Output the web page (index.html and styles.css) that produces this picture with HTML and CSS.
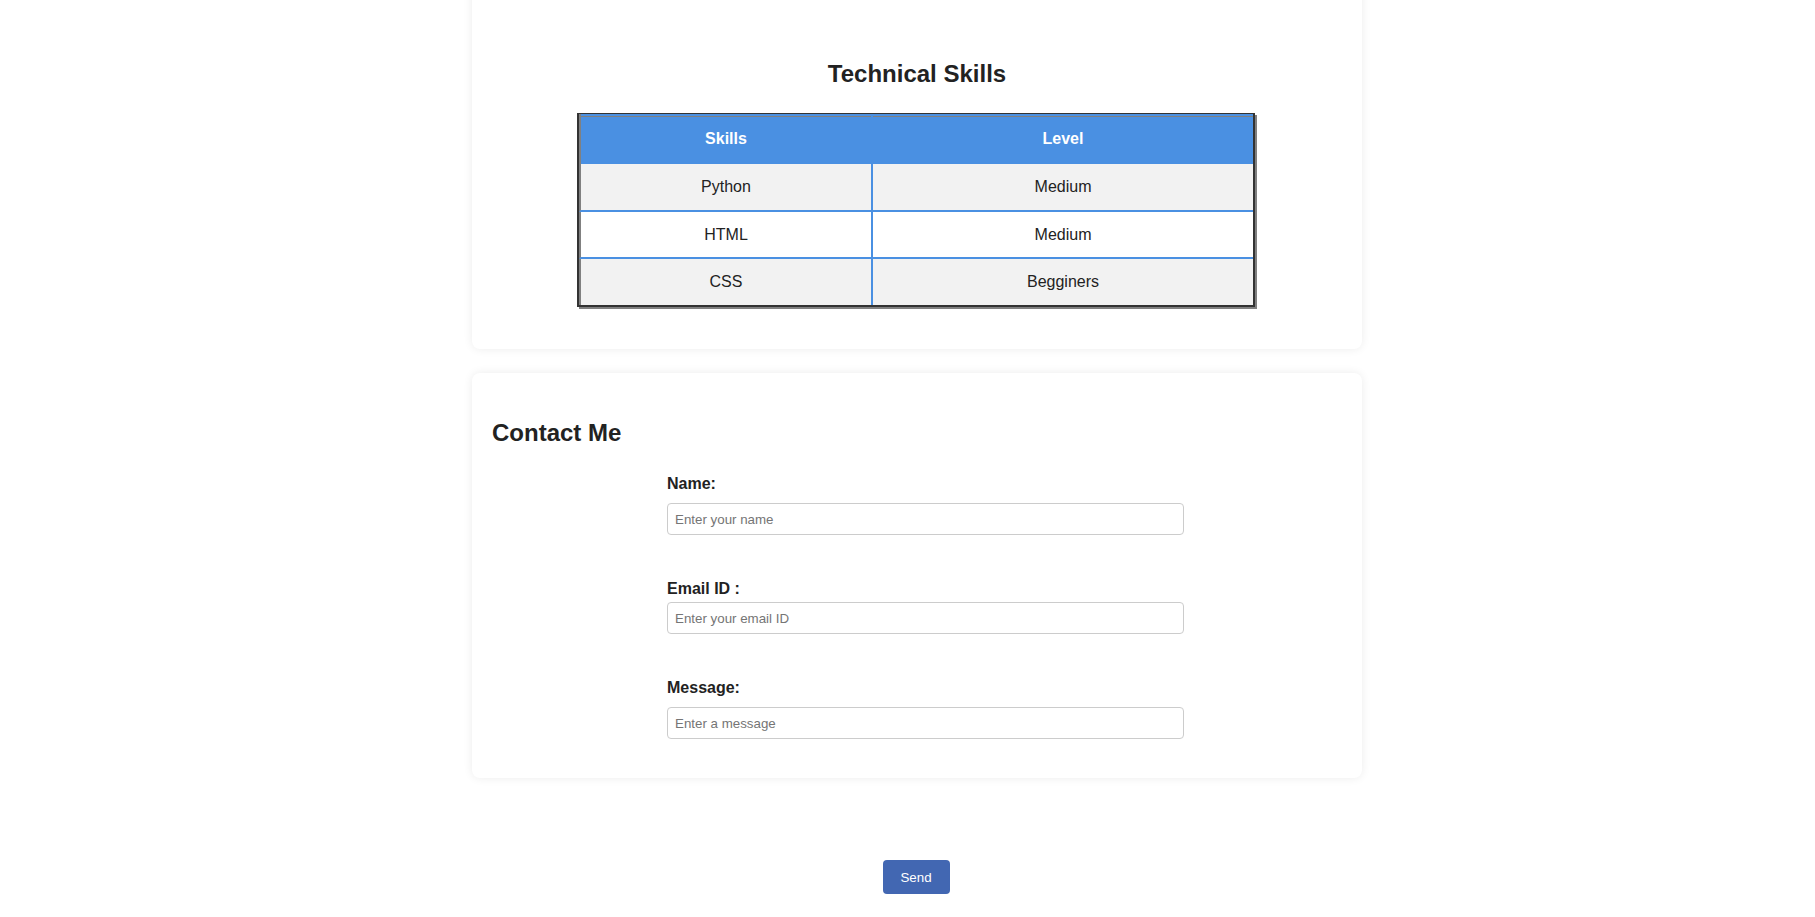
FILE: index.html
```html
<!DOCTYPE html>
<html lang="en">
<head>
<meta charset="utf-8">
<title>Portfolio</title>
<link rel="stylesheet" href="styles.css">
</head>
<body>
<main class="page">
  <section class="card card-skills">
    <h2 class="skills-title">Technical Skills</h2>
    <table class="skills-table">
      <thead>
        <tr><th class="col-skill">Skills</th><th class="col-level">Level</th></tr>
      </thead>
      <tbody>
        <tr class="row-alt"><td class="col-skill">Python</td><td class="col-level">Medium</td></tr>
        <tr class="row-plain"><td class="col-skill">HTML</td><td class="col-level">Medium</td></tr>
        <tr class="row-alt row-last"><td class="col-skill">CSS</td><td class="col-level">Begginers</td></tr>
      </tbody>
    </table>
  </section>

  <section class="card card-contact">
    <h2 class="contact-title">Contact Me</h2>
    <form class="contact-form">
      <label class="field-label label-name" for="name">Name:</label>
      <input class="field-input input-name" id="name" type="text" placeholder="Enter your name">
      <label class="field-label label-email" for="email">Email ID :</label>
      <input class="field-input input-email" id="email" type="email" placeholder="Enter your email ID">
      <label class="field-label label-message" for="message">Message:</label>
      <input class="field-input input-message" id="message" type="text" placeholder="Enter a message">
    </form>
  </section>

  <div class="actions">
    <button class="send-btn" type="button">Send</button>
  </div>
</main>
</body>
</html>
```

FILE: styles.css
```css
* {
  box-sizing: border-box;
}

html, body {
  margin: 0;
  background: #ffffff;
}

body {
  font-family: "Liberation Sans", Arial, sans-serif;
  color: #222222;
  padding-left: 19px;
  overflow: hidden;
}

.page {
  width: 890px;
  margin: 0 auto;
  display: flex;
  flex-direction: column;
}

.card {
  background: #ffffff;
  border-radius: 8px;
  box-shadow: 0 0 10px rgba(0, 0, 0, 0.08);
  padding: 20px;
}

.card-skills {
  margin-top: -20px;
  padding-bottom: 20px;
  display: flex;
  flex-direction: column;
  align-items: center;
}

.skills-title {
  margin: 60px 0 0;
  font-size: 24px;
  line-height: 28px;
  font-weight: bold;
  color: #222222;
  text-align: center;
}

.skills-table {
  margin: 25px 2px 22px 0;
  border-collapse: separate;
  border-spacing: 0;
  border-style: solid;
  border-color: #333333;
  border-width: 1px 2px 2px 2px;
  box-shadow: 2px 2px 0 #808080;
  font-size: 16px;
}

.skills-table th,
.skills-table td {
  padding: 0;
  text-align: center;
  vertical-align: middle;
}

.skills-table .col-skill {
  width: 294px;
  border-left: 2px solid #808080;
  border-right: 2px solid #4a90e2;
}

.skills-table .col-level {
  width: 380px;
}

.skills-table th {
  height: 50px;
  background: #4a90e2;
  color: #ffffff;
  font-weight: bold;
  box-shadow: inset 0 2px 0 #4a90e2, inset 0 3px 0 #808080;
}

.skills-table td {
  color: #222222;
  height: 48px;
  border-bottom: 2px solid #4a90e2;
}

.skills-table .row-alt td {
  background: #f2f2f2;
}

.skills-table .row-plain td {
  background: #ffffff;
  height: 47px;
}

.skills-table .row-last td {
  border-bottom: none;
  height: 46px;
}

.card-contact {
  margin-top: 24px;
  padding-bottom: 39px;
}

.contact-title {
  margin: 26px 0 0;
  font-size: 24px;
  line-height: 28px;
  font-weight: bold;
  color: #222222;
}

.contact-form {
  display: flex;
  flex-direction: column;
  align-items: flex-start;
  padding-left: 175px;
}

.field-label {
  display: block;
  font-size: 16px;
  line-height: 18px;
  font-weight: bold;
  color: #222222;
}

.label-name {
  margin-top: 28px;
}

.label-email,
.label-message {
  margin-top: 45px;
}

.field-input {
  display: block;
  width: 517px;
  height: 32px;
  margin-top: 10px;
  padding: 0 7px;
  border: 1px solid #cccccc;
  border-radius: 4px;
  font-family: "Liberation Sans", Arial, sans-serif;
  font-size: 13.333px;
  color: #222222;
  background: #ffffff;
}

.input-email {
  margin-top: 4px;
}

.field-input::placeholder {
  color: #757575;
}

.actions {
  display: flex;
  justify-content: center;
  margin-top: 82px;
  padding-right: 2px;
}

.send-btn {
  height: 34px;
  width: 67px;
  padding: 0;
  border: none;
  border-radius: 4px;
  background: #4267b2;
  color: #ffffff;
  font-family: "Liberation Sans", Arial, sans-serif;
  font-size: 13.333px;
  cursor: pointer;
}
```
